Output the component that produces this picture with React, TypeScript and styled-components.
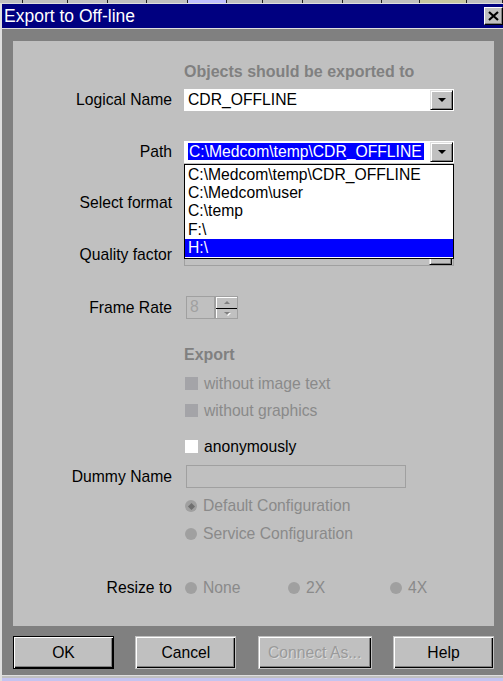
import React from "react";
import styled, { createGlobalStyle } from "styled-components";

const Global = createGlobalStyle`
  html, body { margin: 0; padding: 0; background: #c0c0c0; overflow: hidden; }
  body { font-family: "Liberation Sans", Arial, sans-serif; }
  #root { width: 503px; height: 681px; }
`;

const Screen = styled.div`
  width: 503px;
  height: 681px;
  display: flex;
  flex-direction: column;
  overflow: hidden;
  font-family: "Liberation Sans", Arial, sans-serif;
`;

const Strip = styled.div`
  height: 4px;
  display: flex;
  background: #c0c0c0;
  overflow: hidden;
`;

const StripSeg = styled.div<{ $w: number; $mark?: string }>`
  width: ${(p) => p.$w}px;
  flex: none;
  border-right: 1px solid #202020;
  box-sizing: border-box;
  position: relative;
  background: ${(p) => p.$mark ?? "#c0c0c0"};
`;

const Window = styled.div`
  flex: 1;
  display: flex;
  flex-direction: column;
  border-top: 1px solid #dfdfdf;
  border-left: 2px solid #dfdfdf;
  background: #808080;
`;

const TitleBar = styled.div`
  height: 24px;
  background: #000080;
  display: flex;
  align-items: center;
  justify-content: space-between;
  padding-left: 2px;
  border-bottom: 1px solid #dfdfdf;
`;

const TitleText = styled.div`
  color: #fff;
  font-size: 17.5px;
  line-height: 20px;
`;

const CloseBtn = styled.div`
  width: 19px;
  height: 18px;
  box-sizing: border-box;
  background: #c0c0c0;
  border-top: 1px solid #fff;
  border-left: 1px solid #fff;
  border-right: 1px solid #000;
  border-bottom: 1px solid #000;
  box-shadow: inset -1px -1px 0 #808080;
  display: flex;
  align-items: center;
  justify-content: center;
`;

const Body = styled.div`
  flex: 1;
  display: flex;
  flex-direction: column;
  padding: 12px 9px 0 11px;
`;

const Panel = styled.div`
  height: 585px;
  background: #c0c0c0;
  display: flex;
  flex-direction: column;
  font-size: 15.7px;
  color: #000;
`;

const Row = styled.div<{ $top: number; $h: number }>`
  display: grid;
  grid-template-columns: 159px 1fr;
  column-gap: 12px;
  align-items: center;
  margin-top: ${(p) => p.$top}px;
  height: ${(p) => p.$h}px;
`;

const Label = styled.div`
  text-align: right;
  white-space: nowrap;
  line-height: 18px;
`;

const Cell = styled.div`
  display: flex;
  align-items: center;
  height: 100%;
  position: relative;
`;

const Heading = styled.div`
  font-weight: bold;
  font-size: 16px;
  color: #808080;
  line-height: 20px;
  white-space: nowrap;
`;

const Combo = styled.div<{ $disabled?: boolean }>`
  width: 270px;
  height: 22px;
  box-sizing: border-box;
  display: flex;
  align-items: center;
  padding: 1px;
  background: ${(p) => (p.$disabled ? "#c0c0c0" : "#fff")};
  border: ${(p) => (p.$disabled ? "1px solid #a0a0a0" : "none")};
  position: relative;
`;

const ComboText = styled.div`
  flex: 1;
  padding-left: 3px;
  white-space: nowrap;
  line-height: 18px;
`;

const Selected = styled.span`
  background: #0000ff;
  color: #fff;
  display: inline-block;
  line-height: 17px;
  padding: 0 2px 0 1px;
`;

const DropBtn = styled.div`
  width: 23px;
  height: 20px;
  box-sizing: border-box;
  background: #c0c0c0;
  border-top: 1px solid #dfdfdf;
  border-left: 1px solid #dfdfdf;
  border-right: 1px solid #000;
  border-bottom: 1px solid #000;
  box-shadow: inset 1px 1px 0 #fff, inset -1px -1px 0 #808080;
  display: flex;
  align-items: center;
  justify-content: center;
  flex: none;
`;

const Arrow = styled.div<{ $color?: string }>`
  width: 0;
  height: 0;
  border-left: 4px solid transparent;
  border-right: 4px solid transparent;
  border-top: 4px solid ${(p) => p.$color ?? "#000"};
`;

const DropList = styled.div`
  position: absolute;
  left: 0;
  top: 23px;
  width: 270px;
  box-sizing: border-box;
  border: 1px solid #000;
  background: #fff;
  padding: 1px 0;
  z-index: 5;
`;

const ListItem = styled.div<{ $sel?: boolean }>`
  height: 18.2px;
  line-height: 18px;
  padding-left: 3px;
  white-space: nowrap;
  background: ${(p) => (p.$sel ? "#0000ff" : "transparent")};
  color: ${(p) => (p.$sel ? "#fff" : "#000")};
`;

const Spin = styled.div`
  display: flex;
  margin-left: 2px;
  height: 23px;
`;

const SpinField = styled.div`
  width: 29px;
  height: 23px;
  box-sizing: border-box;
  border: 1px solid #a0a0a0;
  color: #a0a0a0;
  padding-left: 3px;
  line-height: 20px;
`;

const SpinBtns = styled.div`
  width: 23px;
  display: flex;
  flex-direction: column;
  border: 1px solid #a0a0a0;
  box-sizing: border-box;
`;

const SpinBtn = styled.div<{ $down?: boolean }>`
  flex: 1;
  background: #c0c0c0;
  border-top: 1px solid ${(p) => (p.$down ? "#000" : "#fff")};
  box-shadow: inset 1px 0 0 #fff;
  display: flex;
  align-items: center;
  justify-content: center;
`;

const SmallArrow = styled.div<{ $up?: boolean }>`
  width: 0;
  height: 0;
  border-left: 3px solid transparent;
  border-right: 3px solid transparent;
  ${(p) => (p.$up ? "border-bottom: 3px solid #808080;" : "border-top: 3px solid #808080;")}
  ${(p) => (p.$up ? "" : "filter: drop-shadow(1px 1px 0 #fff);")}
`;

const TextBox = styled.div`
  width: 220px;
  height: 23px;
  margin-left: 2px;
  box-sizing: border-box;
  border: 1px solid #a0a0a0;
`;

const Check = styled.div`
  display: flex;
  align-items: center;
  gap: 6px;
  padding-left: 1px;
`;

const Box = styled.div<{ $on?: boolean }>`
  width: 13px;
  height: 13px;
  background: ${(p) => (p.$on ? "#fff" : "#a4a4a8")};
  flex: none;
`;

const OptText = styled.span<{ $dim?: boolean }>`
  color: ${(p) => (p.$dim ? "#8a8a8a" : "#000")};
  white-space: nowrap;
  line-height: 18px;
`;

const RadioGroup = styled.div`
  display: flex;
  align-items: center;
`;

const Radio = styled.div<{ $w?: number }>`
  display: flex;
  align-items: center;
  gap: 6px;
  padding-left: 1px;
  width: ${(p) => (p.$w ? `${p.$w}px` : "auto")};
  flex: none;
`;

const Dot = styled.div<{ $on?: boolean }>`
  width: 12px;
  height: 12px;
  border-radius: 50%;
  background: #a0a0a0;
  flex: none;
  display: flex;
  align-items: center;
  justify-content: center;
  &::after {
    content: "";
    display: ${(p) => (p.$on ? "block" : "none")};
    width: 5px;
    height: 5px;
    background: #707070;
    transform: rotate(45deg);
  }
`;

const Buttons = styled.div`
  margin-top: 10px;
  height: 33px;
  display: flex;
  justify-content: space-between;
`;

const Btn = styled.div<{ $w: number; $default?: boolean; $disabled?: boolean }>`
  width: ${(p) => p.$w}px;
  height: 33px;
  box-sizing: border-box;
  background: #c0c0c0;
  border: 1px solid ${(p) => (p.$default ? "#000" : "#c0c0c0")};
  box-shadow: inset 1px 1px 0 #fff, inset -1px -1px 0 #000, inset -2px -2px 0 #808080;
  display: flex;
  align-items: center;
  justify-content: center;
  font-size: 15.7px;
  color: ${(p) => (p.$disabled ? "#9a9a9a" : "#000")};
  text-shadow: ${(p) => (p.$disabled ? "1px 1px 0 #dcdcdc" : "none")};
`;

const BottomEdge = styled.div`
  margin-top: 6px;
  height: 5px;
  border-top: 1px solid #dfdfdf;
  background: linear-gradient(#c0c0c0 0 2px, #c4c4f0 2px);
  margin-left: -11px;
  margin-right: -9px;
`;

const paths = [
  "C:\\Medcom\\temp\\CDR_OFFLINE",
  "C:\\Medcom\\user",
  "C:\\temp",
  "F:\\",
  "H:\\",
];

const segs: { w: number; mark?: string }[] = [
  { w: 23 }, { w: 45 }, { w: 40 }, { w: 39 }, { w: 41 }, { w: 39, mark: "#c0c0ff" },
  { w: 36 }, { w: 40 }, { w: 40 }, { w: 39 }, { w: 38 }, { w: 47, mark: "#c8c8a0" }, { w: 36 },
];

export default function App() {
  return (
    <Screen>
      <Global />
      <Strip>
        {segs.map((s, i) => (
          <StripSeg key={i} $w={s.w} $mark={s.mark} />
        ))}
      </Strip>
      <Window>
        <TitleBar>
          <TitleText>Export to Off-line</TitleText>
          <CloseBtn>
            <svg width="11" height="10" viewBox="0 0 11 10">
              <path d="M1 1 L10 9 M10 1 L1 9" stroke="#000" strokeWidth="2.2" fill="none" />
            </svg>
          </CloseBtn>
        </TitleBar>
        <Body>
          <Panel>
            <Row $top={21} $h={20}>
              <span />
              <Heading>Objects should be exported to</Heading>
            </Row>
            <Row $top={7} $h={22}>
              <Label>Logical Name</Label>
              <Cell>
                <Combo>
                  <ComboText>CDR_OFFLINE</ComboText>
                  <DropBtn>
                    <Arrow />
                  </DropBtn>
                </Combo>
              </Cell>
            </Row>
            <Row $top={30} $h={22}>
              <Label>Path</Label>
              <Cell>
                <Combo>
                  <ComboText>
                    <Selected>C:\Medcom\temp\CDR_OFFLINE</Selected>
                  </ComboText>
                  <DropBtn>
                    <Arrow />
                  </DropBtn>
                  <DropList>
                    {paths.map((p, i) => (
                      <ListItem key={p} $sel={i === paths.length - 1}>
                        {p}
                      </ListItem>
                    ))}
                  </DropList>
                </Combo>
              </Cell>
            </Row>
            <Row $top={29} $h={22}>
              <Label>Select format</Label>
              <Cell>
                <Combo $disabled>
                  <ComboText />
                  <DropBtn>
                    <Arrow $color="#808080" />
                  </DropBtn>
                </Combo>
              </Cell>
            </Row>
            <Row $top={30} $h={22}>
              <Label>Quality factor</Label>
              <Cell>
                <Combo $disabled>
                  <ComboText />
                  <DropBtn>
                    <Arrow $color="#808080" />
                  </DropBtn>
                </Combo>
              </Cell>
            </Row>
            <Row $top={30} $h={23}>
              <Label>Frame Rate</Label>
              <Cell>
                <Spin>
                  <SpinField>8</SpinField>
                  <SpinBtns>
                    <SpinBtn>
                      <SmallArrow $up />
                    </SpinBtn>
                    <SpinBtn $down>
                      <SmallArrow />
                    </SpinBtn>
                  </SpinBtns>
                </Spin>
              </Cell>
            </Row>
            <Row $top={26} $h={20}>
              <span />
              <Heading>Export</Heading>
            </Row>
            <Row $top={5} $h={27}>
              <span />
              <Check>
                <Box />
                <OptText $dim>without image text</OptText>
              </Check>
            </Row>
            <Row $top={0} $h={27}>
              <span />
              <Check>
                <Box />
                <OptText $dim>without graphics</OptText>
              </Check>
            </Row>
            <Row $top={9} $h={27}>
              <span />
              <Check>
                <Box $on />
                <OptText>anonymously</OptText>
              </Check>
            </Row>
            <Row $top={5} $h={23}>
              <Label>Dummy Name</Label>
              <Cell>
                <TextBox />
              </Cell>
            </Row>
            <Row $top={4} $h={28}>
              <span />
              <Radio>
                <Dot $on />
                <OptText $dim>Default Configuration</OptText>
              </Radio>
            </Row>
            <Row $top={0} $h={28}>
              <span />
              <Radio>
                <Dot />
                <OptText $dim>Service Configuration</OptText>
              </Radio>
            </Row>
            <Row $top={26} $h={28}>
              <Label>Resize to</Label>
              <RadioGroup>
                <Radio $w={102}>
                  <Dot />
                  <OptText $dim>None</OptText>
                </Radio>
                <Radio $w={101}>
                  <Dot />
                  <OptText $dim>2X</OptText>
                </Radio>
                <Radio>
                  <Dot />
                  <OptText $dim>4X</OptText>
                </Radio>
              </RadioGroup>
            </Row>
          </Panel>
          <Buttons>
            <Btn $w={101} $default>OK</Btn>
            <Btn $w={101}>Cancel</Btn>
            <Btn $w={114} $disabled>Connect As...</Btn>
            <Btn $w={101}>Help</Btn>
          </Buttons>
          <BottomEdge />
        </Body>
      </Window>
    </Screen>
  );
}
